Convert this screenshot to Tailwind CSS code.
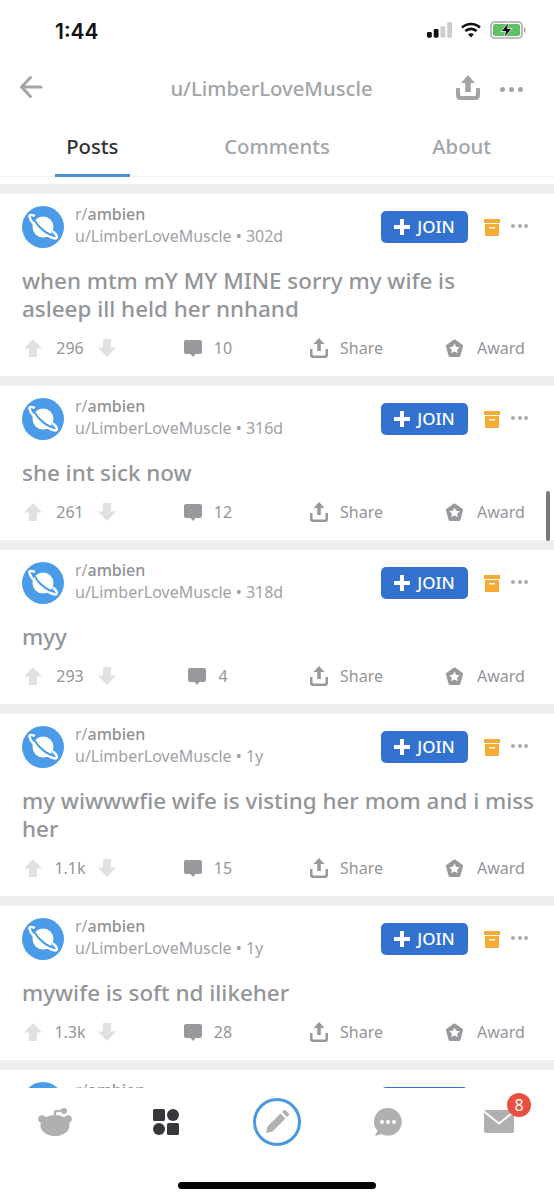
<!DOCTYPE html>
<html lang="en">
<head>
  <meta charset="UTF-8">
  <meta name="viewport" content="width=device-width, initial-scale=1.0">
  <title>u/LimberLoveMuscle</title>
  <script src="https://cdn.jsdelivr.net/npm/@tailwindcss/browser@4"></script>
</head>
<body class="bg-white font-['Noto_Sans',sans-serif]">
  <div class="relative flex h-[1200px] w-[554px] flex-col overflow-hidden bg-white">

    <!-- status bar -->
    <div class="flex h-[60px] shrink-0 items-center justify-between pl-[55px] pr-[28px] pt-1">
      <span class="font-['Inter',sans-serif] text-[21px] font-semibold text-[#111]">1:44</span>
      <div class="flex items-center gap-[9px] pb-[4px]">
        <svg width="25" height="16" viewBox="0 0 26 16">
          <rect x="0" y="10" width="5" height="6" rx="1.5" fill="#111"/>
          <rect x="7" y="7" width="5" height="9" rx="1.5" fill="#111"/>
          <rect x="14" y="4" width="5" height="12" rx="1.5" fill="#ccc"/>
          <rect x="21" y="0" width="5" height="16" rx="1.5" fill="#ccc"/>
        </svg>
        <svg width="20" height="16" viewBox="0 0 20 16" fill="none" stroke="#111" stroke-width="2.6">
          <path d="M1 5.500c5-4.600 13-4.600 18 0"/>
          <path d="M4.400 9c3.200-2.900 8-2.900 11.200 0"/>
          <path d="M10 15.500l-2.900-3.200c1.700-1.300 4.100-1.300 5.800 0z" fill="#111" stroke="none"/>
        </svg>
        <svg width="36" height="18" viewBox="0 0 36 18">
          <rect x="1" y="1" width="31" height="16" rx="3.500" fill="none" stroke="#a9a9a9" stroke-width="1.500"/>
          <rect x="3" y="3" width="27" height="12" rx="2" fill="#5cc264"/>
          <rect x="34" y="6.500" width="1.500" height="5" fill="#a9a9a9"/>
          <path d="M19 1l-8 9.500h4.500L14 17l8-9.500h-4.500z" fill="#111" stroke="#fff" stroke-width="0.800"/>
        </svg>
      </div>
    </div>

    <!-- header -->
    <div class="relative flex h-[56px] shrink-0 items-center justify-center pr-[11px]">
      <svg class="absolute left-[19px] top-[15px]" width="24" height="24" viewBox="0 0 24 24" fill="none" stroke="#a2a4a6" stroke-width="3" stroke-linecap="round" stroke-linejoin="round">
        <path d="M22 12H3M11.500 2.500L2.500 12l9 9.500"/>
      </svg>
      <span class="text-[20.300px] font-medium leading-none text-[#a3a5a8]">u/LimberLoveMuscle</span>
      <svg class="absolute left-[456px] top-[15px]" width="24" height="25" viewBox="0 0 24 25" fill="#a2a4a6">
        <path d="M12 0l7 8h-4.200v9H9.200V8H5z"/>
        <path d="M0 13h4v6.500c0 .8.700 1.500 1.500 1.500h13c.8 0 1.500-.7 1.500-1.500V13h4v8c0 2.200-1.800 4-4 4H4c-2.200 0-4-1.800-4-4z"/>
      </svg>
      <div class="absolute left-[500px] top-[27px] flex gap-[4px]">
        <span class="size-[5px] rounded-full bg-[#a2a4a6]"></span>
        <span class="size-[5px] rounded-full bg-[#a2a4a6]"></span>
        <span class="size-[5px] rounded-full bg-[#a2a4a6]"></span>
      </div>
    </div>

    <!-- tabs -->
    <div class="grid h-[61px] shrink-0 grid-cols-3 border-b border-[#f0f1f2] text-center text-[20.300px] font-medium">
      <div class="relative pt-[15px] text-[#303235]">
        Posts
        <span class="absolute bottom-[-1px] left-[55px] h-[3px] w-[75px] bg-[#4a90d9]"></span>
      </div>
      <div class="pt-[15px] text-[#a3a5a8]">Comments</div>
      <div class="pt-[15px] text-[#a3a5a8]">About</div>
    </div>

    <!-- feed -->
    <div id="feed" class="flex min-h-0 flex-1 flex-col overflow-hidden pt-[7px]"></div>

    <!-- scroll indicator -->
    <div class="absolute left-[546px] top-[491px] h-[50px] w-1 rounded-full bg-[#77797c]"></div>

    <!-- bottom nav -->
    <div class="relative h-[112px] shrink-0 bg-white">
      <div class="grid h-[68px] grid-cols-5 items-center">
        <div class="flex justify-center">
          <svg width="34" height="28" viewBox="0 0 34 28" fill="#aeb0b2">
            <circle cx="4" cy="11" r="3.800"/>
            <circle cx="30" cy="11" r="3.800"/>
            <ellipse cx="17" cy="17.500" rx="14.500" ry="10.500"/>
            <path d="M17 9V3.500l7-1" fill="none" stroke="#aeb0b2" stroke-width="2.200"/>
            <circle cx="26" cy="3" r="3"/>
          </svg>
        </div>
        <div class="flex justify-center">
          <svg width="26" height="26" viewBox="0 0 26 26" fill="#35373a">
            <rect x="0" y="0" width="12" height="12" rx="1.500"/>
            <circle cx="20" cy="6" r="6"/>
            <circle cx="6" cy="20" r="6"/>
            <rect x="14" y="14" width="12" height="12" rx="1.500"/>
          </svg>
        </div>
        <div class="flex justify-center">
          <div class="flex size-[48px] items-center justify-center rounded-full border-[3px] border-[#4a98e0]">
            <svg width="24" height="24" viewBox="0 0 24 24" fill="#aeb0b2">
              <path d="M1 23l1.500-6.500L15.500 3.500l5 5L7.500 21.500z"/>
              <path d="M17 2l1.500-1.500c.7-.7 1.600-.7 2.300 0l2.700 2.700c.7.7.7 1.600 0 2.300L22 7z"/>
            </svg>
          </div>
        </div>
        <div class="flex justify-center">
          <svg width="28" height="28" viewBox="0 0 28 28">
            <path d="M14 0a13.800 13.800 0 1 1-6.500 26L1 28l2.500-5A13.800 13.800 0 0 1 14 0z" fill="#aeb0b2"/>
            <circle cx="8" cy="14" r="2" fill="#fff"/>
            <circle cx="14" cy="14" r="2" fill="#fff"/>
            <circle cx="20" cy="14" r="2" fill="#fff"/>
          </svg>
        </div>
        <div class="relative flex justify-center">
          <svg width="30" height="24" viewBox="0 0 30 24">
            <rect x="0" y="0" width="30" height="23" rx="2" fill="#aeb0b2"/>
            <path d="M0 1.500l15 12 15-12" fill="none" stroke="#fff" stroke-width="2"/>
          </svg>
          <span class="absolute left-[64px] top-[-17px] flex size-[24px] items-center justify-center rounded-full bg-[#e9503f] text-[16px] leading-none text-white">8</span>
        </div>
      </div>
      <div class="absolute bottom-[11px] left-[178px] h-[7px] w-[198px] rounded-full bg-black"></div>
    </div>
  </div>

  <script>
    const posts = [
      { age: '302d', title: 'when mtm mY MY MINE sorry my wife is<br>asleep ill held her nnhand', score: '296', comments: '10' },
      { age: '316d', title: 'she int sick now', score: '261', comments: '12' },
      { age: '318d', title: 'myy', score: '293', comments: '4' },
      { age: '1y', title: 'my wiwwwfie wife is visting her mom and i miss her', score: '1.1k', comments: '15' },
      { age: '1y', title: 'mywife is soft nd ilikeher', score: '1.3k', comments: '28' }
    ];

    function renderHeader(userLine) {
      return `
        <div class="flex h-[42px] items-start pl-[22px]">
          <svg class="shrink-0" width="42" height="42" viewBox="0 0 42 42">
            <circle cx="21" cy="21" r="21" fill="#4a9be8"/>
            <circle cx="21" cy="21" r="10.500" fill="#fff"/>
            <path d="M12 9.500c-3.500-1-5-.5-4.500 1.500.8 3.500 6 10 12 14.500 7 5 13.500 8 15 6.500 1-1-.5-3.500-3-6" fill="none" stroke="#fff" stroke-width="2.500" stroke-linecap="round"/>
            <path d="M12.500 13.500c2 5 8 12 16.500 15.500" fill="none" stroke="#4a9be8" stroke-width="2"/>
          </svg>
          <div class="ml-[11px] w-[306px] text-[16px] leading-[22px] text-[#a0a2a5]">
            <div class="-mt-[3px]">r/<span class="font-medium text-[#8f9194]">ambien</span></div>
            <div class="whitespace-nowrap">${userLine}</div>
          </div>
          <div class="mt-[5px] flex h-[32px] w-[87px] shrink-0 items-center justify-center gap-[7px] rounded-[5px] bg-[#3272ce] text-[17px] font-medium text-white">
            <svg width="16" height="16" viewBox="0 0 16 16" fill="#fff"><path d="M6 0h4v6h6v4h-6v6H6v-6H0V6h6z"/></svg>
            JOIN
          </div>
          <svg class="ml-4 mt-[13px] shrink-0" width="16" height="17" viewBox="0 0 16 17" fill="#f5ab35">
            <rect x="0" y="0" width="16" height="4" rx="0.500"/>
            <path d="M1 5h14v11c0 .6-.4 1-1 1H2c-.6 0-1-.4-1-1z"/>
            <rect x="5" y="8" width="6" height="1.500" fill="#fff"/>
          </svg>
          <div class="ml-[11px] mt-[18px] flex gap-[2.500px]">
            <span class="size-[4px] rounded-full bg-[#a8aaac]"></span>
            <span class="size-[4px] rounded-full bg-[#a8aaac]"></span>
            <span class="size-[4px] rounded-full bg-[#a8aaac]"></span>
          </div>
        </div>`;
    }

    function renderPost(post) {
      return `
        <div class="h-[10px] shrink-0 bg-[#edeff1]"></div>
        <div class="shrink-0 bg-white pb-[20px] pt-3">
          ${renderHeader('u/LimberLoveMuscle • ' + post.age)}
          <p class="mt-[19px] pl-[22px] pr-3 text-[22.400px] font-medium leading-[28px] text-[#939598]">${post.title}</p>
          <div class="mt-[13px] grid h-5 grid-cols-[92px_184px_145px_79px] items-center pl-6 text-[16px] text-[#939598]">
            <div class="flex items-center justify-between">
              <svg width="18" height="18" viewBox="0 0 18 18" fill="#dfe1e2"><path d="M9 0l9 9.500h-5V18H5V9.500H0z"/></svg>
              <span>${post.score}</span>
              <svg width="18" height="18" viewBox="0 0 18 18" fill="#dfe1e2"><path d="M9 18L0 8.500h5V0h8v8.500h5z"/></svg>
            </div>
            <div class="flex items-center justify-center gap-3">
              <svg width="18" height="17" viewBox="0 0 18 17" fill="#97999c"><path d="M2 0h14c1.100 0 2 .9 2 2v10c0 1.100-.9 2-2 2h-4.500L9 17l-2.500-3H2c-1.100 0-2-.9-2-2V2C0 .9.900 0 2 0z"/></svg>
              <span>${post.comments}</span>
            </div>
            <div class="flex items-center gap-3 pl-[10px]">
              <svg width="18" height="20" viewBox="0 0 18 20" fill="#97999c">
                <path d="M9 0l5.500 6h-3.700v7H7.200V6H3.500z"/>
                <path d="M0 11h2.500v5.500c0 .5.500 1 1 1h11c.5 0 1-.5 1-1V11H18v6.500c0 1.400-1.100 2.500-2.500 2.500h-13C1.100 20 0 18.900 0 17.500z"/>
              </svg>
              <span>Share</span>
            </div>
            <div class="flex items-center gap-[13px] whitespace-nowrap">
              <svg class="shrink-0" width="19" height="19" viewBox="0 0 19 19">
                <path d="M9.500 2l7 5-2.600 9.500H5.100L2.500 7z" fill="#97999c" stroke="#97999c" stroke-width="3" stroke-linejoin="round"/>
                <path d="M9.500 4.500l1.600 3.300 3.600.4-2.600 2.500.7 3.600-3.300-1.800-3.300 1.800.7-3.600-2.600-2.500 3.600-.4z" fill="#fff"/>
              </svg>
              <span>Award</span>
            </div>
          </div>
        </div>`;
    }

    // the next post only peeks out above the tab bar, so just its header row
    const peek = `
      <div class="h-[10px] shrink-0 bg-[#edeff1]"></div>
      <div class="shrink-0 bg-white pt-3">${renderHeader('')}</div>`;

    document.getElementById('feed').innerHTML = posts.map(renderPost).join('') + peek;
  </script>
</body>
</html>
